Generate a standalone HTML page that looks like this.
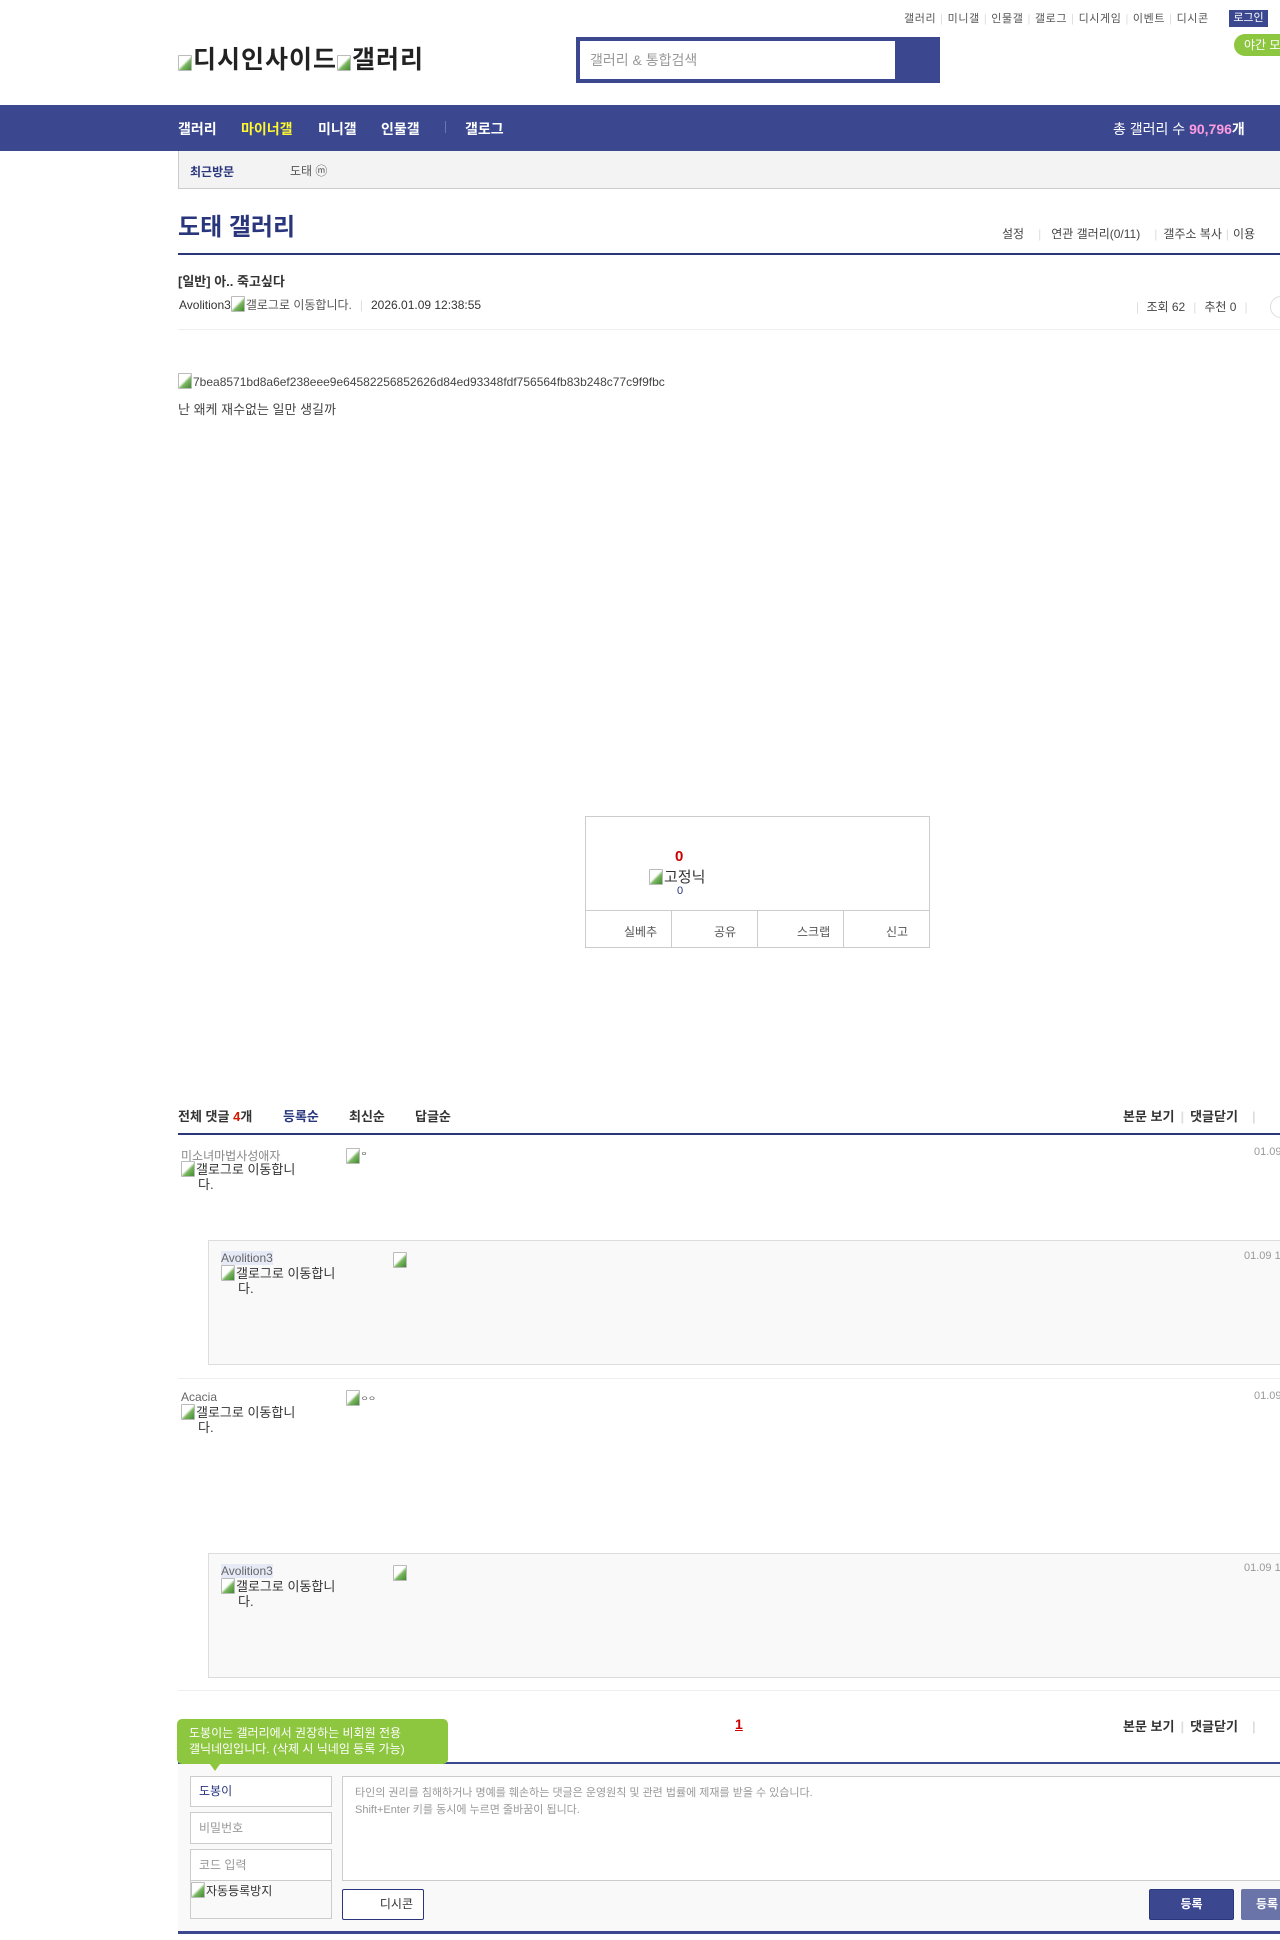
<!DOCTYPE html>
<html><head><meta charset="utf-8">
<style>
*{margin:0;padding:0;box-sizing:border-box}
body{width:1280px;height:1940px;overflow:hidden;background:#fff;font-family:"Liberation Sans","Noto Sans CJK KR",sans-serif;color:#333;position:relative;font-size:12px}
.a{position:absolute;white-space:nowrap}
.bi{display:inline-block;width:14px;height:16px;vertical-align:-3px;border:1px solid #bbb;border-radius:1px;background:linear-gradient(135deg,#fff 45%,#fff 45%,#7bb661 60%,#3e8a2e);margin-right:1px}
.sep{color:#ddd;margin:0 4px}
.blue{color:#29367c}
</style></head><body>
<!-- top links -->
<div class="a" style="left:904px;top:10px;font-size:11px;color:#555;letter-spacing:0.6px">갤러리<span class="sep">|</span>미니갤<span class="sep">|</span>인물갤<span class="sep">|</span>갤로그<span class="sep">|</span>디시게임<span class="sep">|</span>이벤트<span class="sep">|</span>디시콘</div>
<div class="a" style="left:1229px;top:10px;width:39px;height:17px;background:#3b4890;color:#fff;font-size:11px;text-align:center;line-height:17px">로그인</div>
<div class="a" style="left:1234px;top:34px;width:60px;height:22px;background:#8dc63f;color:#fff;border-radius:11px;font-size:12px;line-height:22px;padding-left:10px">야간 모드</div>
<!-- logo -->
<div class="a" style="left:178px;top:40px;font-size:25px;font-weight:bold;color:#222;letter-spacing:1px"><span class="bi"></span>디시인사이드<span class="bi"></span>갤러리</div>
<!-- search -->
<div class="a" style="left:576px;top:37px;width:364px;height:46px;background:#3b4890"></div>
<div class="a" style="left:580px;top:41px;width:315px;height:38px;background:#fff;font-size:14px;color:#999;line-height:38px;padding-left:10px">갤러리 &amp; 통합검색</div>
<!-- nav -->
<div class="a" style="left:0;top:105px;width:1280px;height:46px;background:#3b4890"></div>
<div class="a" style="left:178px;top:119px;font-size:14px;font-weight:bold;color:#fff">갤러리</div>
<div class="a" style="left:241px;top:119px;font-size:14px;font-weight:bold;color:#fff82e">마이너갤</div>
<div class="a" style="left:318px;top:119px;font-size:14px;font-weight:bold;color:#fff">미니갤</div>
<div class="a" style="left:381px;top:119px;font-size:14px;font-weight:bold;color:#fff">인물갤</div>
<div class="a" style="left:445px;top:121px;width:1px;height:12px;background:#6b76b0"></div>
<div class="a" style="left:465px;top:119px;font-size:14px;font-weight:bold;color:#fff">갤로그</div>
<div class="a" style="left:1113px;top:119px;font-size:14px;color:#fff">총 갤러리 수 <b style="color:#ff9ce0">90,796</b><b>개</b></div>
<!-- sub bar -->
<div class="a" style="left:178px;top:151px;width:1110px;height:38px;background:#f3f3f3;border-left:1px solid #ccc;border-bottom:1px solid #ccc"></div>
<div class="a blue" style="left:190px;top:163px;font-size:12px;font-weight:bold">최근방문</div>
<div class="a" style="left:290px;top:162px;font-size:12px;color:#555">도태 ⓜ</div>
<!-- title -->
<div class="a blue" style="left:178px;top:207px;font-size:24px;font-weight:bold">도태 갤러리</div>
<div class="a" style="left:1002px;top:225px;font-size:12px;color:#444">설정<span class="sep" style="margin:0 10px 0 14px">|</span>연관 갤러리(0/11)<span class="sep" style="margin:0 6px 0 14px">|</span>갤주소 복사<span class="sep">|</span>이용</div>
<div class="a" style="left:178px;top:253px;width:1110px;height:2px;background:#29367c"></div>
<!-- post -->
<div class="a" style="left:178px;top:271px;font-size:13px;font-weight:bold;color:#333">[일반] 아.. 죽고싶다</div>
<div class="a" style="left:179px;top:296px;font-size:12px;color:#333">Avolition3<span class="bi"></span><span style="color:#555">갤로그로 이동합니다.</span><span class="sep" style="margin:0 8px">|</span>2026.01.09 12:38:55</div>
<div class="a" style="left:1132px;top:298px;font-size:12px;color:#444"><span class="sep">|</span> 조회 62<span class="sep" style="margin:0 8px">|</span>추천 0<span class="sep" style="margin:0 8px">|</span></div>
<div class="a" style="left:1270px;top:296px;width:22px;height:22px;border:1px solid #ddd;border-radius:50%"></div>
<div class="a" style="left:178px;top:329px;width:1110px;height:1px;background:#eee"></div>
<div class="a" style="left:178px;top:373px;font-size:12px;color:#444"><span class="bi"></span>7bea8571bd8a6ef238eee9e64582256852626d84ed93348fdf756564fb83b248c77c9f9fbc</div>
<div class="a" style="left:178px;top:399px;font-size:13px;color:#444">난 왜케 재수없는 일만 생길까</div>
<!-- recommend box -->
<div class="a" style="left:585px;top:816px;width:345px;height:132px;border:1px solid #ccc"></div>
<div class="a" style="left:585px;top:910px;width:345px;height:1px;background:#ccc"></div>
<div class="a" style="left:671px;top:910px;width:1px;height:37px;background:#ccc"></div>
<div class="a" style="left:757px;top:910px;width:1px;height:37px;background:#ccc"></div>
<div class="a" style="left:843px;top:910px;width:1px;height:37px;background:#ccc"></div>
<div class="a" style="left:675px;top:848px;font-size:15px;font-weight:bold;color:#c00">0</div>
<div class="a" style="left:649px;top:866px;font-size:15px;color:#333"><span class="bi"></span>고정닉</div>
<div class="a" style="left:677px;top:885px;font-size:11px;color:#29367c">0</div>
<div class="a" style="left:624px;top:923px;font-size:12px;color:#555">실베추</div>
<div class="a" style="left:714px;top:923px;font-size:12px;color:#555">공유</div>
<div class="a" style="left:797px;top:923px;font-size:12px;color:#555">스크랩</div>
<div class="a" style="left:886px;top:923px;font-size:12px;color:#555">신고</div>
<!-- comments header -->
<div class="a" style="left:178px;top:1106px;font-size:13px;font-weight:bold;color:#333">전체 댓글 <span style="color:#d31900">4</span>개</div>
<div class="a blue" style="left:283px;top:1106px;font-size:13px;font-weight:bold">등록순</div>
<div class="a" style="left:349px;top:1106px;font-size:13px;font-weight:bold">최신순</div>
<div class="a" style="left:415px;top:1106px;font-size:13px;font-weight:bold">답글순</div>
<div class="a" style="left:1123px;top:1106px;font-size:13px;font-weight:bold">본문 보기<span class="sep" style="margin:0 6px">|</span>댓글닫기<span class="sep" style="margin:0 14px">|</span></div>
<div class="a" style="left:178px;top:1133px;width:1110px;height:2px;background:#29367c"></div>
<!-- comment 1 -->
<div class="a" style="left:181px;top:1147px;font-size:12px;color:#888">미소녀마법사성애자</div>
<div class="a" style="left:181px;top:1161px;font-size:13px;line-height:15px;color:#333"><span class="bi"></span>갤로그로 이동합니<br><span style="padding-left:17px">다.</span></div>
<div class="a" style="left:346px;top:1148px;font-size:8px"><span class="bi"></span><sup>ᄋ</sup></div>
<div class="a" style="left:1254px;top:1146px;font-size:11px;color:#999">01.09 12:40</div>
<div class="a" style="left:208px;top:1240px;width:1080px;height:125px;background:#f9f9f9;border:1px solid #ddd"></div>
<div class="a" style="left:221px;top:1251px;font-size:12px;color:#666;background:#e6eaf7">Avolition3</div>
<div class="a" style="left:221px;top:1265px;font-size:13px;line-height:15px;color:#333"><span class="bi"></span>갤로그로 이동합니<br><span style="padding-left:17px">다.</span></div>
<div class="a" style="left:393px;top:1252px;font-size:8px"><span class="bi"></span></div>
<div class="a" style="left:1244px;top:1250px;font-size:11px;color:#999">01.09 12:41</div>
<div class="a" style="left:178px;top:1378px;width:1110px;height:1px;background:#eee"></div>
<!-- comment 2 -->
<div class="a" style="left:181px;top:1390px;font-size:12px;color:#666">Acacia</div>
<div class="a" style="left:181px;top:1404px;font-size:13px;line-height:15px;color:#333"><span class="bi"></span>갤로그로 이동합니<br><span style="padding-left:17px">다.</span></div>
<div class="a" style="left:346px;top:1390px;font-size:8px;color:#555"><span class="bi"></span>ᄋᄋ</div>
<div class="a" style="left:1254px;top:1390px;font-size:11px;color:#999">01.09 12:41</div>
<div class="a" style="left:208px;top:1553px;width:1080px;height:125px;background:#f9f9f9;border:1px solid #ddd"></div>
<div class="a" style="left:221px;top:1564px;font-size:12px;color:#666;background:#e6eaf7">Avolition3</div>
<div class="a" style="left:221px;top:1578px;font-size:13px;line-height:15px;color:#333"><span class="bi"></span>갤로그로 이동합니<br><span style="padding-left:17px">다.</span></div>
<div class="a" style="left:393px;top:1565px;font-size:8px"><span class="bi"></span></div>
<div class="a" style="left:1244px;top:1562px;font-size:11px;color:#999">01.09 12:42</div>
<div class="a" style="left:178px;top:1690px;width:1110px;height:1px;background:#eee"></div>
<!-- pagination -->
<div class="a" style="left:735px;top:1716px;font-size:14px;font-weight:bold;color:#c00;text-decoration:underline">1</div>
<div class="a" style="left:1123px;top:1716px;font-size:13px;font-weight:bold">본문 보기<span class="sep" style="margin:0 6px">|</span>댓글닫기<span class="sep" style="margin:0 14px">|</span></div>
<!-- write form -->
<div class="a" style="left:178px;top:1762px;width:1110px;height:2px;background:#3b4890"></div>
<div class="a" style="left:178px;top:1764px;width:1110px;height:167px;background:#f9f9f9"></div>
<div class="a" style="left:178px;top:1931px;width:1110px;height:3px;background:#3b4890"></div>
<div class="a" style="left:177px;top:1719px;width:271px;height:45px;background:#8dc63f;border-radius:5px;color:#fff;font-size:12px;line-height:16px;padding:6px 0 0 12px;white-space:normal">도봉이는 갤러리에서 권장하는 비회원 전용<br>갤닉네임입니다. (삭제 시 닉네임 등록 가능)</div>
<div class="a" style="left:210px;top:1764px;width:0;height:0;border-left:5px solid transparent;border-right:5px solid transparent;border-top:7px solid #8dc63f"></div>
<div class="a" style="left:190px;top:1776px;width:142px;height:31px;background:#fff;border:1px solid #ccc;font-size:12px;color:#29367c;line-height:29px;padding-left:8px">도봉이</div>
<div class="a" style="left:190px;top:1812px;width:142px;height:32px;background:#fff;border:1px solid #ccc;font-size:12px;color:#999;line-height:30px;padding-left:8px">비밀번호</div>
<div class="a" style="left:190px;top:1849px;width:142px;height:70px;border:1px solid #ccc"></div>
<div class="a" style="left:190px;top:1849px;width:142px;height:32px;background:#fff;border:1px solid #ccc;font-size:12px;color:#999;line-height:30px;padding-left:8px">코드 입력</div>
<div class="a" style="left:191px;top:1882px;font-size:12px;color:#333"><span class="bi"></span>자동등록방지</div>
<div class="a" style="left:342px;top:1776px;width:950px;height:105px;background:#fff;border:1px solid #ccc;font-size:11px;color:#999;line-height:17px;padding:8px 12px">타인의 권리를 침해하거나 명예를 훼손하는 댓글은 운영원칙 및 관련 법률에 제재를 받을 수 있습니다.<br>Shift+Enter 키를 동시에 누르면 줄바꿈이 됩니다.</div>
<div class="a" style="left:342px;top:1889px;width:82px;height:31px;background:#fff;border:1px solid #29367c;border-radius:2px;font-size:12px;color:#333;line-height:29px;text-align:right;padding-right:10px">디시콘</div>
<div class="a" style="left:1149px;top:1889px;width:85px;height:31px;background:#3b4890;border:1px solid #29367c;border-radius:2px;font-size:12px;font-weight:bold;color:#fff;line-height:29px;text-align:center">등록</div>
<div class="a" style="left:1241px;top:1889px;width:85px;height:31px;background:#6b74a8;border-radius:2px;font-size:12px;font-weight:bold;color:#fff;line-height:31px;padding-left:15px">등록</div>
</body></html>
